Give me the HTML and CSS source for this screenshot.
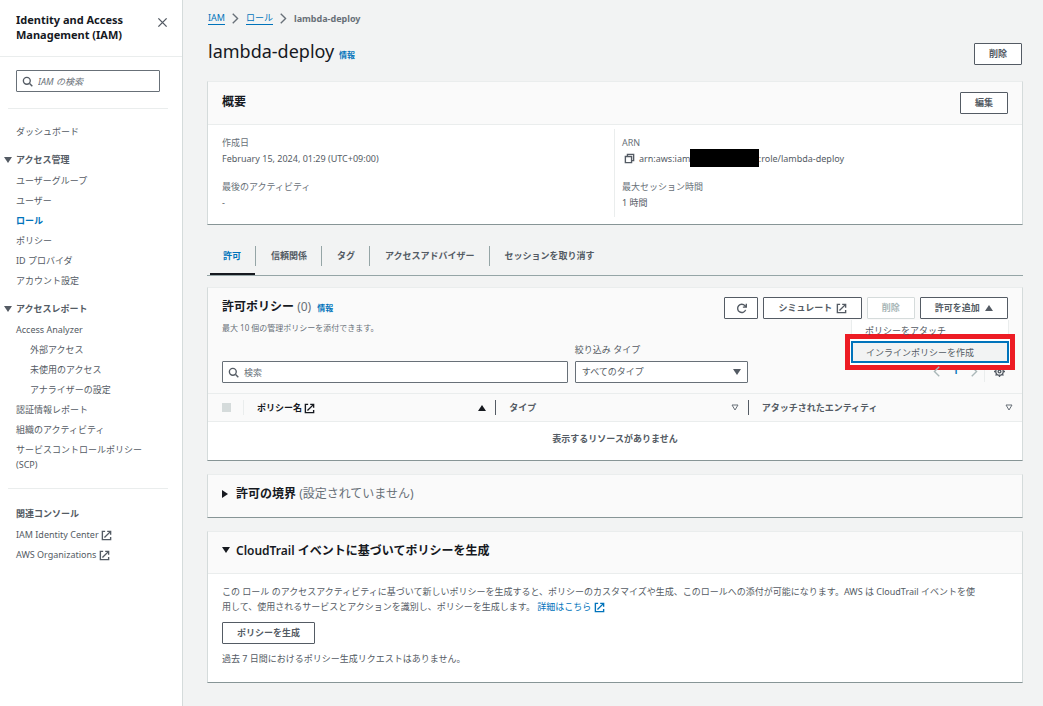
FILE: index.html
```
<!DOCTYPE html>
<html lang="ja">
<head>
    <meta charset="UTF-8">
    <meta name="viewport" content="width=device-width, initial-scale=1.0">
    <title>lambda-deploy | IAM</title>
    <link rel="stylesheet" href="styles.css">
</head>
<body>
    <!-- Shared icons -->
    <svg class="sprite" aria-hidden="true">
        <symbol id="external" viewBox="0 0 16 16"><path d="M9 2h5v5M5 11l9-9M6 2H2v12h12v-4" /></symbol>
        <symbol id="search" viewBox="0 0 16 16"><circle cx="7" cy="7" r="5" /><path d="M11 11l4 4" /></symbol>
        <symbol id="close" viewBox="0 0 16 16"><path d="M2 2l12 12M14 2L2 14" /></symbol>
        <symbol id="chevron" viewBox="0 0 16 16"><path d="M4 1l7 7-7 7" /></symbol>
        <symbol id="copy" viewBox="0 0 16 16"><path d="M2 5h9v9H2zM5 5V2h9v9h-3" /></symbol>
        <symbol id="refresh" viewBox="0 0 16 16"><path d="M10 6h5V1M14 10a6 6 0 1 1-1-6l2 2" /></symbol>
        <symbol id="gear" viewBox="0 0 16 16"><circle cx="8" cy="8" r="2" /><circle cx="8" cy="8" r="5.5" /><path d="M8 0v3M8 13v3M0 8h3M13 8h3M2.300 2.300l2 2M11.700 11.700l2 2M13.700 2.300l-2 2M4.300 11.700l-2 2" /></symbol>
    </svg>

    <aside class="sidebar">
        <div class="sidebar-header">
            <h2>Identity and Access Management (IAM)</h2>
            <button class="close-btn" aria-label="閉じる"><svg class="icon"><use href="#close" /></svg></button>
        </div>
        <div class="sidebar-search">
            <div class="input-box">
                <svg class="icon"><use href="#search" /></svg>
                <input type="search" class="italic" placeholder="IAM の検索" aria-label="IAM の検索">
            </div>
        </div>
        <nav>
            <ul>
                <li><a href="#">ダッシュボード</a></li>
            </ul>
            <h3><span class="tri down"></span>アクセス管理</h3>
            <ul>
                <li><a href="#">ユーザーグループ</a></li>
                <li><a href="#">ユーザー</a></li>
                <li><a href="#" class="active">ロール</a></li>
                <li><a href="#">ポリシー</a></li>
                <li><a href="#">ID プロバイダ</a></li>
                <li><a href="#">アカウント設定</a></li>
            </ul>
            <h3><span class="tri down"></span>アクセスレポート</h3>
            <ul>
                <li><a href="#">Access Analyzer</a></li>
                <li class="nested"><a href="#">外部アクセス</a></li>
                <li class="nested"><a href="#">未使用のアクセス</a></li>
                <li class="nested"><a href="#">アナライザーの設定</a></li>
                <li><a href="#">認証情報レポート</a></li>
                <li><a href="#">組織のアクティビティ</a></li>
                <li><a href="#">サービスコントロールポリシー (SCP)</a></li>
            </ul>
        </nav>
        <nav class="related">
            <h3>関連コンソール</h3>
            <ul>
                <li><a href="#">IAM Identity Center <svg class="icon"><use href="#external" /></svg></a></li>
                <li><a href="#">AWS Organizations <svg class="icon"><use href="#external" /></svg></a></li>
            </ul>
        </nav>
    </aside>

    <main>
        <div class="breadcrumb">
            <a href="#">IAM</a>
            <svg class="icon"><use href="#chevron" /></svg>
            <a href="#">ロール</a>
            <svg class="icon"><use href="#chevron" /></svg>
            <span>lambda-deploy</span>
        </div>
        <div class="page-title">
            <h1>lambda-deploy <a href="#" class="info">情報</a></h1>
            <button class="btn">削除</button>
        </div>

        <section class="card summary">
            <div class="card-header">
                <h2>概要</h2>
                <button class="btn">編集</button>
            </div>
            <div class="summary-body">
                <dl>
                    <dt>作成日</dt>
                    <dd>February 15, 2024, 01:29 (UTC+09:00)</dd>
                    <dt>最後のアクティビティ</dt>
                    <dd>-</dd>
                </dl>
                <dl>
                    <dt>ARN</dt>
                    <dd class="arn"><svg class="icon"><use href="#copy" /></svg>arn:aws:iam:<span class="masked"></span>:role/lambda-deploy</dd>
                    <dt>最大セッション時間</dt>
                    <dd>1 時間</dd>
                </dl>
            </div>
        </section>

        <div class="tabs" role="tablist">
            <button role="tab" class="active" aria-selected="true">許可</button>
            <button role="tab">信頼関係</button>
            <button role="tab">タグ</button>
            <button role="tab">アクセスアドバイザー</button>
            <button role="tab">セッションを取り消す</button>
        </div>

        <section class="card policies">
            <div class="policies-header">
                <div>
                    <h2>許可ポリシー <span class="count">(0)</span> <a href="#" class="info">情報</a></h2>
                    <p class="description">最大 10 個の管理ポリシーを添付できます。</p>
                </div>
                <div class="actions">
                    <button class="btn refresh" aria-label="更新"><svg class="icon"><use href="#refresh" /></svg></button>
                    <button class="btn">シミュレート <svg class="icon"><use href="#external" /></svg></button>
                    <button class="btn" disabled>削除</button>
                    <div class="dropdown">
                        <button class="btn" aria-expanded="true">許可を追加 <span class="tri up"></span></button>
                        <div class="menu">
                            <button>ポリシーをアタッチ</button>
                            <div class="highlight"><button class="focused">インラインポリシーを作成</button></div>
                        </div>
                    </div>
                </div>
            </div>
            <div class="filters">
                <div class="input-box">
                    <svg class="icon"><use href="#search" /></svg>
                    <input type="search" placeholder="検索" aria-label="検索">
                </div>
                <div class="type-filter">
                    <label for="type">絞り込み タイプ</label>
                    <div class="select-box">
                        <select id="type">
                            <option>すべてのタイプ</option>
                        </select>
                        <span class="tri down"></span>
                    </div>
                </div>
                <div class="pagination">
                    <button aria-label="前へ"><svg class="icon prev"><use href="#chevron" /></svg></button>
                    <button class="current">1</button>
                    <button aria-label="次へ"><svg class="icon"><use href="#chevron" /></svg></button>
                    <button class="settings" aria-label="設定"><svg class="icon"><use href="#gear" /></svg></button>
                </div>
            </div>
            <table>
                <thead>
                    <tr>
                        <th class="col-check"><div><input type="checkbox" disabled aria-label="すべて選択"></div></th>
                        <th class="col-name"><div><span>ポリシー名 <svg class="icon"><use href="#external" /></svg></span><span class="tri up"></span></div></th>
                        <th class="col-type"><div>タイプ<svg class="sort" viewBox="0 0 8 7"><path d="M1 1h6L4 6z" /></svg></div></th>
                        <th><div>アタッチされたエンティティ<svg class="sort" viewBox="0 0 8 7"><path d="M1 1h6L4 6z" /></svg></div></th>
                    </tr>
                </thead>
                <tbody>
                    <tr>
                        <td colspan="4">表示するリソースがありません</td>
                    </tr>
                </tbody>
            </table>
        </section>

        <details class="card">
            <summary><span class="tri right"></span><h2>許可の境界 <span class="count">(設定されていません)</span></h2></summary>
        </details>

        <details class="card" open>
            <summary><span class="tri down"></span><h2>CloudTrail イベントに基づいてポリシーを生成</h2></summary>
            <div class="generate">
                <p>この ロール のアクセスアクティビティに基づいて新しいポリシーを生成すると、ポリシーのカスタマイズや生成、このロールへの添付が可能になります。AWS は CloudTrail イベントを使<br>用して、使用されるサービスとアクションを識別し、ポリシーを生成します。 <a href="#">詳細はこちら <svg class="icon"><use href="#external" /></svg></a></p>
                <button class="btn">ポリシーを生成</button>
                <p>過去 7 日間におけるポリシー生成リクエストはありません。</p>
            </div>
        </details>
    </main>
</body>
</html>
```
FILE: styles.css
```
/* Reset and Base Styles */
* {
    margin: 0;
    padding: 0;
    box-sizing: border-box;
}

body {
    font-family: "Noto Sans", "Noto Sans CJK JP", sans-serif;
    font-size: 9px;
    line-height: 15px;
    color: #545b64;
    background-color: #f2f3f3;
    display: flex;
    min-height: 100vh;
}

button, input, select {
    font: inherit;
    color: inherit;
    background: none;
    border: none;
}

a {
    color: #0073bb;
    text-decoration: none;
}

ul {
    list-style: none;
}

h2 {
    font-size: 12px;
    font-weight: 600;
    color: #16191f;
}

.sprite {
    position: absolute;
    width: 0;
    height: 0;
}

.icon {
    width: 11px;
    height: 11px;
    fill: none;
    stroke: currentColor;
    stroke-width: 2;
    vertical-align: middle;
}

.tri {
    display: inline-block;
    flex: none;
    border: 4px solid transparent;
}

.tri.down {
    border-top: 6px solid currentColor;
    border-bottom: none;
}

.tri.up {
    border-bottom: 6px solid currentColor;
    border-top: none;
}

.tri.right {
    margin-right: 2px;
    border-left: 6px solid currentColor;
    border-right: none;
}

/* Form controls */
.btn {
    height: 22px;
    padding: 0 14px;
    border: 1px solid #545b64;
    border-radius: 1px;
    background-color: white;
    font-weight: 600;
    line-height: 18px;
    white-space: nowrap;
}

.btn:disabled {
    color: #aab7b8;
    border-color: #d5dbdb;
}

.btn .icon {
    margin-left: 1px;
}

.btn .tri {
    margin-left: 3px;
}

.input-box {
    display: flex;
    align-items: center;
    gap: 5px;
    height: 22px;
    padding: 0 5px;
    border: 1px solid #687078;
    border-radius: 1px;
    background-color: white;
}

.input-box input {
    flex: 1;
    min-width: 0;
    outline: none;
}

.input-box input::placeholder {
    color: #687078;
}

.input-box input.italic::placeholder {
    font-style: italic;
}

/* Sidebar */
.sidebar {
    flex: none;
    width: 183px;
    background-color: white;
    border-right: 1px solid #d5dbdb;
}

.sidebar-header {
    display: flex;
    justify-content: space-between;
    align-items: flex-start;
    padding: 12px 14px 14px 16px;
    border-bottom: 1px solid #eaeded;
}

.sidebar-header h2 {
    width: 120px;
    font-size: 11px;
    font-weight: 700;
}

.close-btn {
    height: 18px;
}

.sidebar-search {
    margin: 0 14px 12px 8px;
    padding: 13px 8px 16px;
    border-bottom: 1px solid #eaeded;
}

.sidebar li {
    padding: 3px 18px 2px 16px;
}

.sidebar li.nested {
    padding-left: 30px;
}

.sidebar li a {
    color: #545b64;
}

.sidebar li a.active {
    color: #0073bb;
    font-weight: 700;
}

.sidebar h3 {
    display: flex;
    align-items: center;
    gap: 4px;
    height: 21px;
    margin-top: 8px;
    padding-left: 4px;
    font-size: 9px;
    font-weight: 700;
}

.related {
    margin: 14px 14px 0 8px;
    padding-top: 6px;
    border-top: 1px solid #eaeded;
}

.sidebar .related h3 {
    padding-left: 8px;
}

.sidebar .related li {
    padding-left: 8px;
    padding-right: 0;
}

/* Main content */
main {
    flex: 1;
    min-width: 0;
    padding: 11px 20px 0 24px;
}

.breadcrumb {
    display: flex;
    align-items: center;
    gap: 5px;
    padding-left: 1px;
    color: #687078;
    font-weight: 700;
}

.breadcrumb a {
    font-weight: 400;
    line-height: 12px;
    border-bottom: 1px solid #0073bb;
}

.page-title {
    display: flex;
    justify-content: space-between;
    align-items: center;
    height: 22px;
    margin: 17px 1px 16px;
}

.page-title h1 {
    font-size: 18px;
    font-weight: 400;
    line-height: 22px;
    color: #16191f;
    padding-bottom: 2px;
}

.info {
    font-size: 8px;
    font-weight: 700;
}

.policies-header .info {
    margin-left: 3px;
}

.count {
    color: #687078;
    font-weight: 400;
}

.card {
    background-color: white;
    border: 1px solid #d5dbdb;
    border-top-color: #eaeded;
    border-bottom-color: #879596;
    margin-bottom: 13px;
}

.card-header, .card summary {
    display: flex;
    align-items: center;
    height: 42px;
    padding: 0 14px;
    background-color: #fafafa;
}

.card-header {
    justify-content: space-between;
    height: 43px;
    border-bottom: 1px solid #eaeded;
}

.card-header h2 {
    padding-bottom: 4px;
}

.card summary {
    gap: 6px;
    padding-bottom: 4px;
    color: #16191f;
}

.card[open] summary {
    border-bottom: 1px solid #eaeded;
}

.summary {
    margin-bottom: 12px;
}

.summary-body {
    display: grid;
    grid-template-columns: 49% 1fr;
    padding: 4px 0 7px 14px;
}

.summary-body dl {
    padding: 6px 0 7px;
}

.summary-body dl + dl {
    padding-left: 7px;
    border-left: 1px solid #eaeded;
}

.summary-body dt {
    color: #687078;
}

.summary-body dt + dd {
    margin-top: 1px;
}

.summary-body dd + dt {
    margin-top: 13px;
}

.arn {
    display: flex;
    align-items: center;
}

.arn .icon {
    margin: 0 4px 0 2px;
}

.masked {
    width: 69px;
    height: 18px;
    margin: -2px 0 -1px -3px;
    background-color: black;
}

/* Tabs */
.tabs {
    display: flex;
    gap: 1px;
    margin-bottom: 11px;
    padding: 9px 0 0 2px;
    border-bottom: 1px solid #95a5a6;
}

.tabs button {
    position: relative;
    height: 20px;
    margin-bottom: 9px;
    padding: 0 14px;
    font-weight: 700;
    line-height: 18px;
    border-right: 1px solid #95a5a6;
}

.tabs button:last-child {
    border-right: none;
}

.tabs button.active {
    color: #0073bb;
}

.tabs button.active::after {
    content: "";
    position: absolute;
    left: 1px;
    right: 0;
    bottom: -9px;
    height: 2px;
    background-color: #16191f;
}

/* Permission policies */
.policies {
    background-color: #fafafa;
}

.policies-header {
    display: flex;
    justify-content: space-between;
    padding: 9px 14px 0;
}

.policies-header h2 {
    line-height: 20px;
}

.description {
    font-size: 8px;
    margin-top: 2px;
    color: #687078;
}

.actions {
    display: flex;
    gap: 5px;
}

.refresh {
    padding: 0 10px;
}

.dropdown {
    position: relative;
}

.menu {
    position: absolute;
    top: 23px;
    right: -1px;
    width: 158px;
    background-color: white;
    border: 1px solid #eaeded;
    border-top: none;
}

.menu button {
    display: block;
    width: 100%;
    height: 20px;
    padding-left: 13px;
    text-align: left;
}

/* Red frame drawn around the highlighted menu item */
.highlight {
    margin: -6px -7px;
    padding: 2px 1px;
    border: 5px solid #ed1c24;
    background-color: white;
}

.menu button.focused {
    height: 22px;
    border: 2px solid #0073bb;
    background-color: #f2f3f3;
}

.filters {
    display: grid;
    grid-template-columns: 44% 22% 1fr;
    align-items: end;
    gap: 7px;
    padding: 7px 14px 10px;
}

.type-filter label {
    display: block;
    margin-bottom: 4px;
}

.select-box {
    position: relative;
}

.select-box select {
    display: block;
    width: 100%;
    height: 22px;
    padding: 0 6px 2px;
    appearance: none;
    border: 1px solid #687078;
    border-radius: 1px;
    background-color: white;
}

.select-box .tri {
    position: absolute;
    right: 7px;
    top: 8px;
}

.pagination {
    display: flex;
    justify-content: flex-end;
    align-items: center;
    height: 22px;
    padding-bottom: 3px;
}

.pagination button {
    width: 19px;
    color: #aab7b8;
}

.pagination .current {
    color: #0073bb;
    font-weight: 700;
}

.pagination .settings {
    width: 24px;
    height: 22px;
    padding-left: 6px;
    border-left: 1px solid #eaeded;
    color: #545b64;
}

.prev {
    transform: scaleX(-1);
}

table {
    width: 100%;
    table-layout: fixed;
    border-collapse: collapse;
}

thead {
    border-top: 1px solid #eaeded;
    border-bottom: 1px solid #eaeded;
}

th {
    height: 28px;
    text-align: left;
    font-weight: 700;
}

th div {
    display: flex;
    justify-content: space-between;
    align-items: center;
    height: 15px;
    padding: 0 9px 0 13px;
    border-right: 1px solid #545b64;
}

th:last-child div {
    border-right: none;
}

.col-check {
    width: 36px;
}

.col-check div {
    padding-left: 14px;
    border-color: #eaeded;
}

.col-check input {
    width: 9px;
    height: 9px;
    appearance: none;
    background-color: #d5dbdb;
}

.col-name, .col-type {
    width: 31%;
}

.col-name {
    color: #16191f;
}

.sort {
    width: 8px;
    height: 7px;
    fill: none;
    stroke: #687078;
}

td {
    height: 38px;
    padding-bottom: 4px;
    background-color: white;
    text-align: center;
    font-weight: 700;
}

/* Policy generation */
.generate {
    padding: 10px 14px 16px;
}

.generate .btn {
    display: block;
    margin: 8px 0 7px;
}
```
